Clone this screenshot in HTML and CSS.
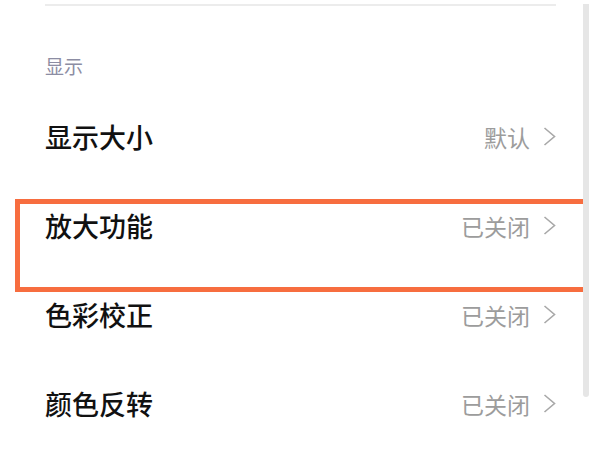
FILE: index.html
```html
<!DOCTYPE html>
<html lang="zh-CN">
<head>
<meta charset="utf-8">
<title>显示</title>
<link rel="stylesheet" href="styles.css">
</head>
<body>
<div class="page">
  <div class="divider"></div>
  <div class="section-title">显示</div>
  <div class="list">
    <div class="row">
      <span class="label">显示大小</span>
      <span class="value">默认<svg class="chev" viewBox="0 0 13 19" width="13" height="19"><path d="M1.5 1 L11.5 9.5 L1.5 18" fill="none" stroke="#a8a8a8" stroke-width="1.6"/></svg></span>
    </div>
    <div class="row">
      <span class="label">放大功能</span>
      <span class="value">已关闭<svg class="chev" viewBox="0 0 13 19" width="13" height="19"><path d="M1.5 1 L11.5 9.5 L1.5 18" fill="none" stroke="#a8a8a8" stroke-width="1.6"/></svg></span>
    </div>
    <div class="row">
      <span class="label">色彩校正</span>
      <span class="value">已关闭<svg class="chev" viewBox="0 0 13 19" width="13" height="19"><path d="M1.5 1 L11.5 9.5 L1.5 18" fill="none" stroke="#a8a8a8" stroke-width="1.6"/></svg></span>
    </div>
    <div class="row">
      <span class="label">颜色反转</span>
      <span class="value">已关闭<svg class="chev" viewBox="0 0 13 19" width="13" height="19"><path d="M1.5 1 L11.5 9.5 L1.5 18" fill="none" stroke="#a8a8a8" stroke-width="1.6"/></svg></span>
    </div>
  </div>
  <div class="highlight"></div>
  <div class="scrollbar"></div>
</div>
</body>
</html>
```
FILE: styles.css
```css
html, body {
  margin: 0;
  padding: 0;
  background: #ffffff;
}
body {
  width: 600px;
  height: 450px;
  overflow: hidden;
  font-family: "Noto Sans CJK SC", "Noto Sans", sans-serif;
}
.page {
  position: relative;
  width: 600px;
  height: 450px;
  padding: 0 44px 0 45px;
  box-sizing: border-box;
}
.divider {
  margin-top: 4px;
  height: 2px;
  background: #ececec;
}
.section-title {
  padding-top: 48px;
  padding-bottom: 14px;
  height: 24px;
  line-height: 24px;
  font-size: 19px;
  color: #8c8da3;
}
.list {
  display: flex;
  flex-direction: column;
}
.row {
  height: 89px;
  display: flex;
  align-items: center;
  justify-content: space-between;
}
.label {
  font-size: 27px;
  font-weight: 500;
  color: #111111;
  line-height: 30px;
}
.value {
  display: flex;
  align-items: center;
  font-size: 23px;
  color: #9c9c9c;
  line-height: 26px;
}
.chev {
  margin-left: 13px;
  display: block;
}
.highlight {
  position: absolute;
  left: 15px;
  top: 195px;
  width: 573px;
  height: 93px;
  box-sizing: border-box;
  border: 5px solid #f76d3f;
}
.scrollbar {
  position: absolute;
  left: 583px;
  top: 0;
  width: 6px;
  height: 393px;
  background: #e6e6e6;
  border-radius: 0 0 3px 3px;
}
```
